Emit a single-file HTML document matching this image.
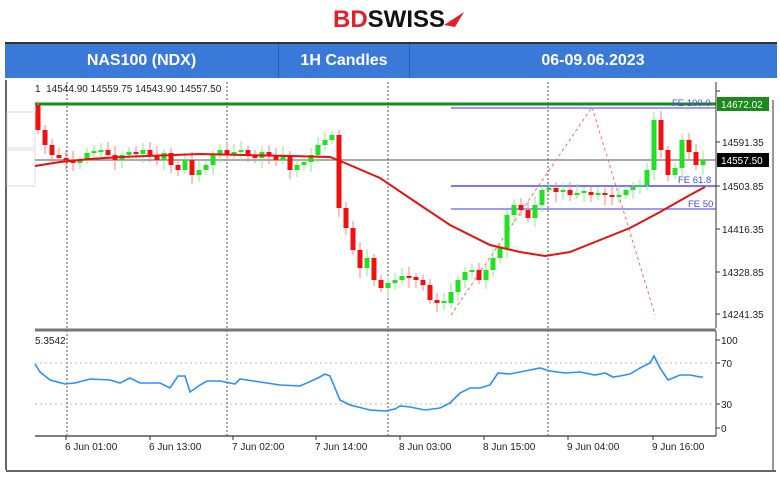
<!DOCTYPE html>
<html><head><meta charset="utf-8"><style>
body{margin:0;width:780px;height:480px;background:#fff;overflow:hidden;font-family:"Liberation Sans",sans-serif;position:relative}
.logo{position:absolute;top:6px;left:333px;font-weight:bold;font-size:24px;letter-spacing:0px}
.hdr{position:absolute;left:5px;top:42px;width:772px;height:36px;background:#3b79d9;border-top:2px solid #333;box-sizing:border-box;color:#fff;font-weight:bold;font-size:16px}
.hdr div{position:absolute;top:0;height:34px;line-height:34px;text-align:center;border-right:1px solid #2a5fb5}
</style></head><body>
<div class="logo"><span style="color:#e3202a">BD</span><span style="color:#111">SWISS</span></div>
<svg style="position:absolute;left:442px;top:9px" width="24" height="20"><path d="M2 16 L22 3 L13 18 Z" fill="#e3202a"/><path d="M7 8h5M9.5 5.5v5" stroke="#fff" stroke-width="1.5"/></svg>
<div class="hdr"><div style="left:0;width:273px">NAS100 (NDX)</div><div style="left:274px;width:130px">1H Candles</div><div style="left:405px;width:366px;border:none">06-09.06.2023</div></div>
<svg id="c" style="position:absolute;left:0;top:0" width="780" height="480" font-family="Liberation Sans, sans-serif"></svg>
<script>
var s='';
function L(x1,y1,x2,y2,c,w,d){s+='<line x1="'+x1+'" y1="'+y1+'" x2="'+x2+'" y2="'+y2+'" stroke="'+c+'" stroke-width="'+(w||1)+'"'+(d?' stroke-dasharray="'+d+'"':'')+'/>';}
function T(x,y,t,c,sz,a){s+='<text x="'+x+'" y="'+y+'" fill="'+(c||'#222')+'" font-size="'+(sz||10)+'"'+(a?' text-anchor="'+a+'"':'')+'>'+t+'</text>';}
L(6,80,6,470,'#333',1.5);L(6,471,776,471,'#333',1.5);
s+='<rect x="7" y="112" width="28" height="36" fill="none" stroke="#ddd"/><rect x="7" y="150" width="28" height="36" fill="none" stroke="#ddd"/>';
L(773,100,773,470,'#333',1);
[67,227,388,548].forEach(function(x){L(x,82,x,436,'#555',1,'2,2');});
L(35,104,716,104,'#1a8a1a',3);
L(35,160,716,160,'#777',1.2);
L(451,108,716,108,'#7a7aff',1.5);L(451,186,716,186,'#4a4aff',1.5);L(451,209,716,209,'#7a7aff',1.5);
T(672,106,'FE 100.0','#44f',9.5);T(678,183,'FE 61.8','#44f',9.5);T(688,207,'FE 50','#44f',9.5);
s+='<polyline points="451,315 592,107 655,315" fill="none" stroke="#f66" stroke-dasharray="3,3"/>';
var cl=[[38,130],[45,145],[52,155],[59,158],[66,160],[73,163],[80,160],[87,153],[94,152],[101,150],[108,155],[115,160],[122,155],[129,152],[136,154],[143,150],[150,155],[157,160],[164,153],[171,165],[178,170],[185,160],[192,175],[199,170],[206,165],[213,155],[220,150],[227,155],[234,152],[241,150],[248,155],[255,158],[262,152],[269,156],[276,160],[283,155],[290,170],[297,165],[304,162],[311,155],[318,145],[325,140],[332,135],[339,208],[346,228],[353,250],[360,268],[367,258],[374,280],[381,288],[388,283],[395,280],[402,276],[409,277],[416,280],[423,285],[430,300],[437,303],[444,303],[451,292],[458,280],[465,272],[472,270],[479,280],[486,270],[493,258],[500,248],[507,215],[514,205],[521,210],[528,218],[535,205],[542,190],[549,188],[556,192],[563,190],[570,195],[577,193],[584,192],[591,195],[598,193],[605,195],[612,197],[619,195],[626,190],[633,187],[640,185],[647,170],[654,120],[661,150],[668,175],[675,168],[682,140],[689,152],[696,165],[703,160]];
var prev=105;
cl.forEach(function(p,i){var o=prev,c=p[1];if(Math.abs(o-c)<2)c=o+(i%2?2:-2);var up=c<o;var col=up?'#22e022':'#f01010';var t=Math.min(o,c),b=Math.max(o,c);
L(p[0],t-4-(i*7%6),p[0],b+4+(i*5%7),up?'#88ee88':'#ff8080',1);
s+='<rect x="'+(p[0]-2.5)+'" y="'+t+'" width="5" height="'+(b-t)+'" fill="'+col+'"/>';prev=p[1];});
s+='<polyline points="35,166 60,162 90,159 120,157 200,154 290,156 330,157 345,163 380,178 420,205 450,225 490,245 520,252 545,256 570,252 600,240 630,228 660,212 690,195 705,187" fill="none" stroke="#e81010" stroke-width="2"/>';
T(35,92,'1&#160;&#160;14544.90 14559.75 14543.90 14557.50','#222',10);
L(716,82,716,328,'#333',1);
[[142,'14591.35'],[186,'14503.85'],[229,'14416.35'],[272,'14328.85'],[314,'14241.35'],[91,'x']].forEach(function(a){L(716,a[0],720,a[0],'#333');if(a[1]!='x')T(722,a[0]+4,a[1],'#222',10);});
s+='<rect x="717" y="97" width="52" height="14" fill="#1a8a1a"/>';T(721,108,'14672.02','#fff',10);
s+='<rect x="717" y="153" width="52" height="14" fill="#000"/>';T(721,164,'14557.50','#fff',10);
L(35,330,716,330,'#777',3);
L(716,331,716,436,'#333',1);L(35,436,716,436,'#555',1.5);
L(35,363,716,363,'#bbb',1,'2,3');L(35,404,716,404,'#bbb',1,'2,3');
[[340,'100'],[363,'70'],[404,'30'],[428,'0']].forEach(function(a){L(716,a[0],720,a[0],'#333');T(721,a[0]+4,a[1],'#222',10);});
T(35,344,'5.3542','#222',10);
s+='<polyline points="35,364 40,372 50,380 65,384 75,383 90,379 110,380 120,383 130,378 140,383 160,383 170,388 178,376 185,376 190,392 200,385 207,381 220,381 235,384 240,379 260,382 280,385 300,386 318,378 325,374 330,376 340,400 350,405 370,410 385,411 395,409 400,406 410,407 425,410 440,408 450,403 460,393 470,388 480,388 490,385 498,373 510,374 520,372 530,370 540,368 550,371 565,373 580,372 595,375 605,373 613,377 620,376 630,374 640,368 650,363 654,356 660,368 668,380 680,375 690,375 700,377 703,377" fill="none" stroke="#2b8fff" stroke-width="1.6"/>';
[[66,'6 Jun 01:00'],[150,'6 Jun 13:00'],[233,'7 Jun 02:00'],[316,'7 Jun 14:00'],[400,'8 Jun 03:00'],[484,'8 Jun 15:00'],[568,'9 Jun 04:00'],[653,'9 Jun 16:00']].forEach(function(a){L(a[0],436,a[0],440,'#333');T(a[0]-1,450,a[1],'#222',10);});
document.getElementById('c').innerHTML=s;
</script>
</body></html>
